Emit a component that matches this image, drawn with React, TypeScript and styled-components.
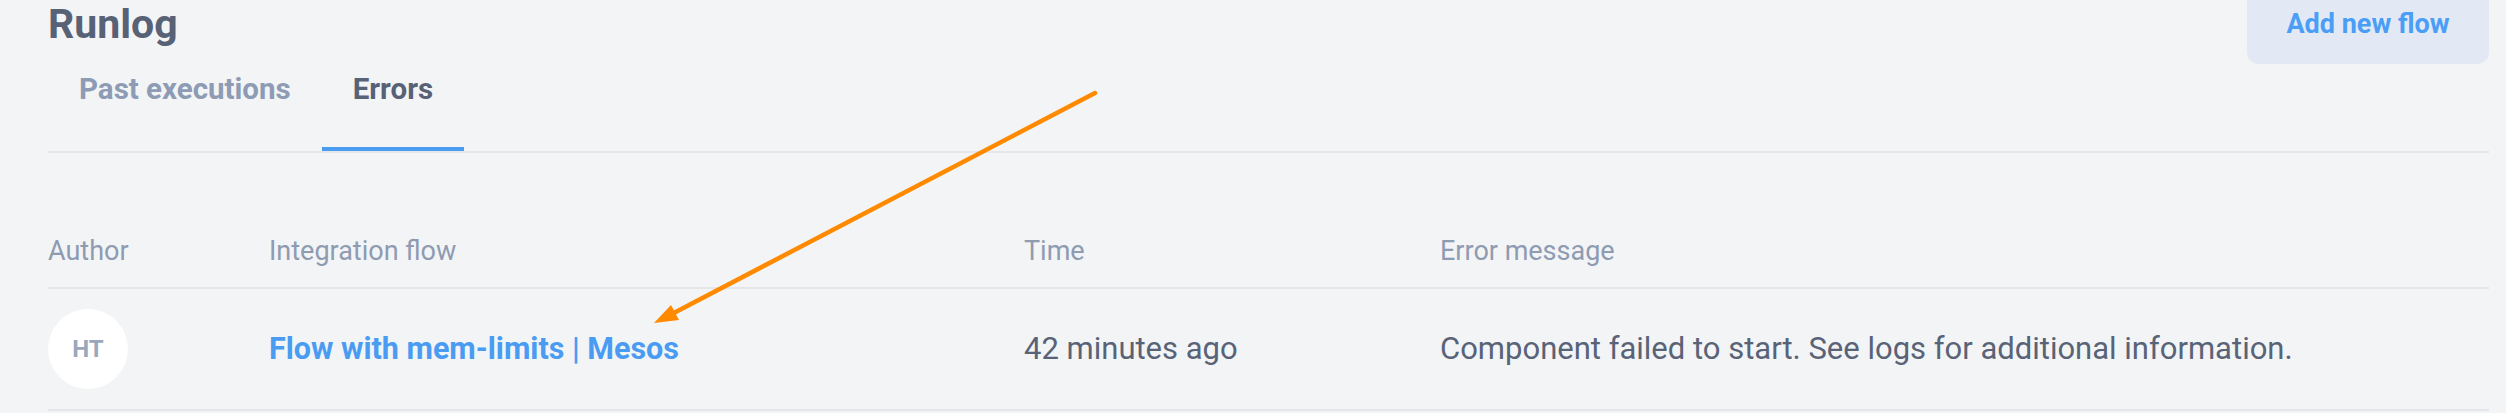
import React from "react";
import styled, { createGlobalStyle } from "styled-components";

const GlobalStyle = createGlobalStyle`
  html, body {
    margin: 0;
    padding: 0;
    background: #f3f4f6;
  }
  body {
    font-family: Roboto, "Liberation Sans", Arial, sans-serif;
    overflow: hidden;
  }
`;

const Viewport = styled.div`
  position: relative;
  height: 413px;
  overflow: hidden;
  background: #f3f4f6;
`;

const Page = styled.div`
  margin-top: -16px;
  padding: 0 17px 0 48px;
`;

const Header = styled.header`
  display: flex;
  justify-content: space-between;
  align-items: center;
  height: 80px;
`;

const Title = styled.h1`
  margin: 0;
  font-size: 41px;
  font-weight: 700;
  line-height: 1;
  color: #586276;
`;

const PrimaryButton = styled.button`
  width: 242px;
  height: 80px;
  border: none;
  border-radius: 12px;
  background: #e2e9f5;
  color: #4a9ef6;
  font-family: inherit;
  font-size: 27px;
  font-weight: 700;
  cursor: pointer;
`;

const TabBar = styled.nav`
  display: flex;
  margin-top: 7px;
  border-bottom: 2px solid #e4e6e9;
`;

const Tab = styled.div<{ $active?: boolean }>`
  padding: 0 31px 40px;
  font-size: 29.5px;
  font-weight: 700;
  line-height: 36px;
  color: ${(p) => (p.$active ? "#586276" : "#8d9cb4")};
  border-bottom: 4px solid ${(p) => (p.$active ? "#4a9cf0" : "transparent")};
`;

const Table = styled.div`
  margin-top: 62px;
`;

const Row = styled.div`
  display: grid;
  grid-template-columns: 221px 755px 416px 1fr;
  align-items: center;
  border-bottom: 2px solid #e4e6e9;
`;

const HeadRow = styled(Row)`
  padding: 20px 0;
  font-size: 27px;
  line-height: 32px;
  color: #8e9bb1;
`;

const BodyRow = styled(Row)`
  min-height: 120px;
  font-size: 31px;
  line-height: 36px;
  color: #596377;
`;

const Avatar = styled.div`
  width: 80px;
  height: 80px;
  border-radius: 50%;
  background: #ffffff;
  display: flex;
  align-items: center;
  justify-content: center;
  font-size: 24px;
  font-weight: 700;
  color: #9aa8bd;
`;

const FlowLink = styled.a`
  color: #4a9cf3;
  font-size: 30.5px;
  font-weight: 700;
  text-decoration: none;
`;

const Annotation = styled.svg`
  position: absolute;
  left: 0;
  top: 0;
  pointer-events: none;
`;

export default function App() {
  return (
    <>
      <GlobalStyle />
      <Viewport>
        <Page>
          <Header>
            <Title>Runlog</Title>
            <PrimaryButton>Add new flow</PrimaryButton>
          </Header>
          <TabBar>
            <Tab>Past executions</Tab>
            <Tab $active>Errors</Tab>
          </TabBar>
          <Table>
            <HeadRow>
              <div>Author</div>
              <div>Integration flow</div>
              <div>Time</div>
              <div>Error message</div>
            </HeadRow>
            <BodyRow>
              <div>
                <Avatar>HT</Avatar>
              </div>
              <div>
                <FlowLink href="#">Flow with mem-limits | Mesos</FlowLink>
              </div>
              <div>42 minutes ago</div>
              <div>Component failed to start. See logs for additional information.</div>
            </BodyRow>
          </Table>
        </Page>
        <Annotation width="2506" height="413" viewBox="0 0 2506 413">
          <line
            x1="1095"
            y1="93"
            x2="668"
            y2="316"
            stroke="#ff8a00"
            strokeWidth="4.5"
            strokeLinecap="round"
          />
          <polygon points="654,323 671,305 679,320" fill="#ff8a00" />
        </Annotation>
      </Viewport>
    </>
  );
}
